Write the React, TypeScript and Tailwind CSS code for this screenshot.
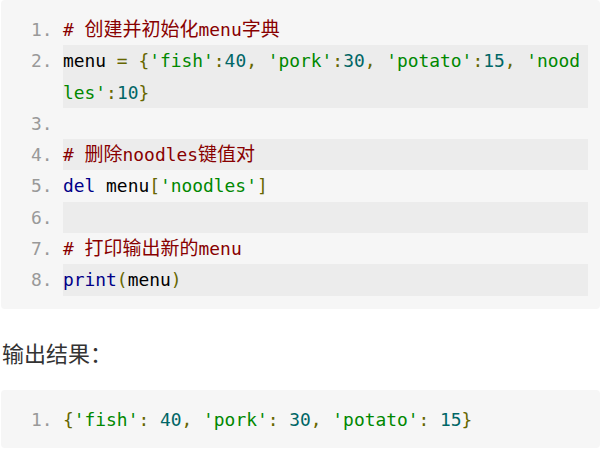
import React from "react";

const C = {
  com: "text-[#880000]",
  str: "text-[#008800]",
  lit: "text-[#006666]",
  pun: "text-[#666600]",
  kwd: "text-[#000088]",
  pln: "text-[#000000]",
};

type Tok = [string, string];

const cjk = (s: string) => (
  <span className="text-[19px] leading-[20px]" style={{ fontFamily: '"Noto Sans CJK SC", sans-serif' }}>
    {s}
  </span>
);

function Toks({ toks }: { toks: Tok[] }) {
  return (
    <>
      {toks.map(([c, t], i) => (
        <span key={i} className={c}>
          {t}
        </span>
      ))}
    </>
  );
}

function Line({
  n,
  shaded,
  tall,
  children,
}: {
  n: number;
  shaded?: boolean;
  tall?: boolean;
  children?: React.ReactNode;
}) {
  return (
    <div className={`flex ${tall ? "h-[62.6px]" : "h-[31.3px]"}`}>
      <span className="w-[32px] shrink-0 text-[#999999]">{n}.</span>
      <div className={`flex-1 whitespace-pre ${shaded ? "bg-[#ececec]" : ""}`}>{children}</div>
    </div>
  );
}

export default function App() {
  const mono = { fontFamily: '"DejaVu Sans Mono", "Noto Sans CJK SC", monospace' };
  return (
    <div className="w-[600px] h-[450px] bg-white overflow-hidden">
      <div
        className="ml-px bg-[#f6f6f6] rounded-[4px] pl-[30px] pr-[12px] pt-[14px] pb-[13px] text-[17.9px] leading-[31.3px]"
        style={mono}
      >
        <Line n={1}>
          <span className={C.com}>
            # {cjk("创建并初始化")}menu{cjk("字典")}
          </span>
        </Line>
        <Line n={2} shaded tall>
          <Toks
            toks={[
              [C.pln, "menu "],
              [C.pun, "= {"],
              [C.str, "'fish'"],
              [C.pun, ":"],
              [C.lit, "40"],
              [C.pun, ", "],
              [C.str, "'pork'"],
              [C.pun, ":"],
              [C.lit, "30"],
              [C.pun, ", "],
              [C.str, "'potato'"],
              [C.pun, ":"],
              [C.lit, "15"],
              [C.pun, ", "],
              [C.str, "'nood"],
            ]}
          />
          <br />
          <Toks
            toks={[
              [C.str, "les'"],
              [C.pun, ":"],
              [C.lit, "10"],
              [C.pun, "}"],
            ]}
          />
        </Line>
        <Line n={3} />
        <Line n={4} shaded>
          <span className={C.com}>
            # {cjk("删除")}noodles{cjk("键值对")}
          </span>
        </Line>
        <Line n={5}>
          <Toks
            toks={[
              [C.kwd, "del"],
              [C.pln, " menu"],
              [C.pun, "["],
              [C.str, "'noodles'"],
              [C.pun, "]"],
            ]}
          />
        </Line>
        <Line n={6} shaded />
        <Line n={7}>
          <span className={C.com}>
            # {cjk("打印输出新的")}menu
          </span>
        </Line>
        <Line n={8} shaded>
          <Toks
            toks={[
              [C.kwd, "print"],
              [C.pun, "("],
              [C.pln, "menu"],
              [C.pun, ")"],
            ]}
          />
        </Line>
      </div>

      <p
        className="mt-[27px] mb-[22px] ml-[2px] text-[22px] leading-[32px] text-[#333333]"
        style={{ fontFamily: '"Noto Sans CJK SC", sans-serif' }}
      >
        输出结果：
      </p>

      <div
        className="ml-px bg-[#f6f6f6] rounded-[4px] pl-[30px] pr-[12px] pt-[14px] pb-[13px] text-[17.9px] leading-[31.3px]"
        style={mono}
      >
        <Line n={1}>
          <Toks
            toks={[
              [C.pun, "{"],
              [C.str, "'fish'"],
              [C.pun, ": "],
              [C.lit, "40"],
              [C.pun, ", "],
              [C.str, "'pork'"],
              [C.pun, ": "],
              [C.lit, "30"],
              [C.pun, ", "],
              [C.str, "'potato'"],
              [C.pun, ": "],
              [C.lit, "15"],
              [C.pun, "}"],
            ]}
          />
        </Line>
      </div>
    </div>
  );
}
